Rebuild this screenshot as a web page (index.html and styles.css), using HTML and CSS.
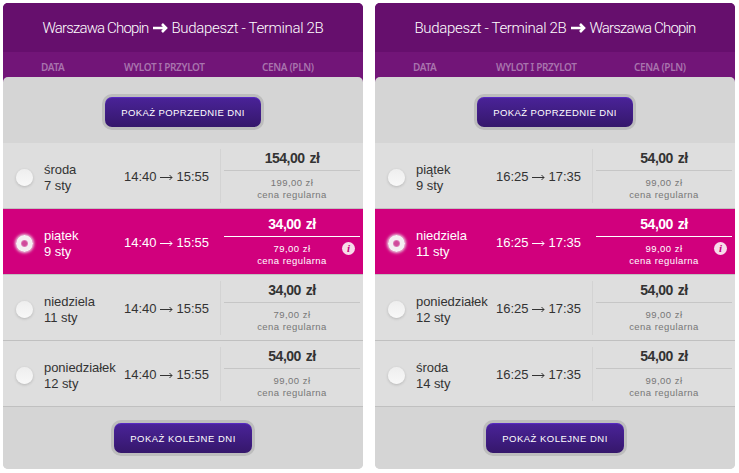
FILE: index.html
```html
<!DOCTYPE html>
<html lang="pl">
<head>
<meta charset="utf-8">
<title>Wybór lotu</title>
<link rel="stylesheet" href="styles.css">
</head>
<body>
<main class="flights" id="flights"></main>
<script src="flights.js"></script>
</body>
</html>
```
FILE: styles.css
```css
* { box-sizing: border-box; }
body {
  margin: 0;
  padding: 3px;
  background: #fff;
  color: #333;
  font: 13px/16px "Liberation Sans", Arial, sans-serif;
}
.flights { display: flex; gap: 12px; }
.panel {
  width: 360px;
  height: 466px;
  flex: none;
  border-radius: 5px;
  overflow: hidden;
  background: linear-gradient(#721578 90px, #d5d5d5 90px);
}
.title {
  height: 49px;
  margin: 0;
  display: flex;
  align-items: center;
  justify-content: center;
  gap: 4px;
  background: #660f6d;
  color: #fff;
  font: 300 15px/20px Roboto, sans-serif;
  white-space: nowrap;
}
.airport-short { width: 106px; letter-spacing: -0.85px; }
.airport-long { width: 152px; letter-spacing: -0.33px; }
.arrow { width: 15px; height: 10px; flex: none; }
.columns {
  height: 25px;
  display: grid;
  grid-template-columns: 83px 138px 1fr;
  padding: 8px 0 0 38px;
  color: #a873ad;
  font: 600 10px/15px "Noto Sans", "Open Sans", sans-serif;
  letter-spacing: -0.35px;
  white-space: nowrap;
}
.body {
  height: 392px;
  border-radius: 5px 5px 0 0;
  background: #d5d5d5;
}
.more { height: 66px; display: flex; justify-content: center; padding: 17px 0 0; }
.more.next { height: 62px; padding: 13px 0 0; }
.button {
  width: 162px;
  height: 36px;
  padding: 2px 0 0;
  border: 3px solid #bdbdbd;
  border-radius: 10px;
  background: linear-gradient(#4a2399, #35176b);
  box-shadow: inset 0 1px 1px #5a2bc8;
  color: #fff;
  font: 9.5px/14px "Liberation Sans", Arial, sans-serif;
  letter-spacing: 0.4px;
  white-space: nowrap;
}
.next .button { width: 144px; letter-spacing: 0.5px; }
.row {
  height: 66px;
  display: grid;
  grid-template-columns: 41px 80px 96px 1fr;
  border-bottom: 1px solid #c0c0c0;
  background: #dedede;
}
.radio {
  width: 17px;
  height: 17px;
  margin: 26px 0 0 13px;
  border-radius: 50%;
  background: linear-gradient(#eee, #f8f8f8);
  box-shadow: 0 1px 3px rgba(0, 0, 0, .18);
}
.date { padding-top: 19px; white-space: nowrap; letter-spacing: -0.05px; }
.time { padding-top: 26px; white-space: nowrap; display: flex; gap: 3.5px; }
.time svg { width: 13px; height: 7px; margin-top: 5px; }
.fare {
  position: relative;
  height: 54px;
  margin: 6px 3px 0 0;
  padding-left: 3px;
  border-left: 1px solid #d3d3d3;
  text-align: center;
}
.price {
  height: 22px;
  padding-top: 1px;
  border-bottom: 1px solid #c6c6c6;
  font-size: 14px;
  font-weight: 700;
  letter-spacing: -0.5px;
  word-spacing: 1.5px;
}
.regular {
  padding-top: 6px;
  color: #777;
  font-size: 9.5px;
  line-height: 12px;
  letter-spacing: 0.45px;
}
.selected { background: #d1007d; color: #fff; }
.selected .fare { border-left-color: transparent; }
.selected .price { border-color: #fff; }
.selected .regular { color: #fff; }
.selected .radio {
  background: radial-gradient(circle, #d04b9b 0 2px, #dc78b4 3px, #f4f0f2 4px);
  box-shadow: 0 0 3px 1px #eadce4;
}
.info {
  position: absolute;
  top: 27px;
  right: 5px;
  width: 13px;
  height: 13px;
  border-radius: 50%;
  background: #f7ddea;
  color: #c70078;
  font: italic 700 11px/13px "Liberation Serif", serif;
}
```
FILE: flights.js
```js
const chopin = '<span class="airport-short">Warszawa Chopin</span>';
const budapest = '<span class="airport-long">Budapeszt - Terminal 2B</span>';
const boldArrow = '<svg class="arrow" viewBox="0 0 15 10"><path d="M0 5H13M9 1L13 5L9 9" fill="none" stroke="#fff" stroke-width="2.6"/></svg>';
const thinArrow = '<svg viewBox="0 0 13 7"><path d="M0 3.5H12M9.5 1L12 3.5L9.5 6" fill="none" stroke="currentColor"/></svg>';

const panels = [
  { from: chopin, to: budapest, start: '14:40', end: '15:55', days: [
    ['środa', '7 sty', '154,00', '199,00'],
    ['piątek', '9 sty', '34,00', '79,00', true],
    ['niedziela', '11 sty', '34,00', '79,00'],
    ['poniedziałek', '12 sty', '54,00', '99,00']
  ] },
  { from: budapest, to: chopin, start: '16:25', end: '17:35', days: [
    ['piątek', '9 sty', '54,00', '99,00'],
    ['niedziela', '11 sty', '54,00', '99,00', true],
    ['poniedziałek', '12 sty', '54,00', '99,00'],
    ['środa', '14 sty', '54,00', '99,00']
  ] }
];

const row = (p, [day, date, price, regular, selected]) => `
  <div class="row${selected ? ' selected' : ''}">
    <span class="radio"></span>
    <div class="date">${day}<br>${date}</div>
    <div class="time"><span>${p.start}</span>${thinArrow}<span>${p.end}</span></div>
    <div class="fare">
      <div class="price">${price} zł</div>
      <div class="regular">${regular} zł<br>cena regularna</div>
      ${selected ? '<span class="info">i</span>' : ''}
    </div>
  </div>`;

document.getElementById('flights').innerHTML = panels.map(p => `
  <section class="panel">
    <h2 class="title">${p.from}${boldArrow}${p.to}</h2>
    <div class="columns"><span>DATA</span><span>WYLOT I PRZYLOT</span><span>CENA (PLN)</span></div>
    <div class="body">
      <div class="more"><button class="button">POKAŻ POPRZEDNIE DNI</button></div>
      ${p.days.map(d => row(p, d)).join('')}
      <div class="more next"><button class="button">POKAŻ KOLEJNE DNI</button></div>
    </div>
  </section>`).join('');
```
